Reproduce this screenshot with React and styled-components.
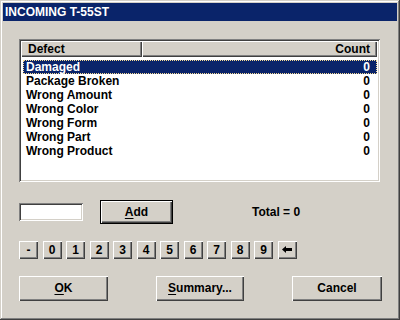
import React from "react"
import styled, { createGlobalStyle } from "styled-components"

const defects = [
  "Damaged",
  "Package Broken",
  "Wrong Amount",
  "Wrong Color",
  "Wrong Form",
  "Wrong Part",
  "Wrong Product",
]
const keys = ["-", "0", "1", "2", "3", "4", "5", "6", "7", "8", "9"]

const GlobalStyle = createGlobalStyle`
  html, body {
    margin: 0;
    padding: 0;
    background: #d4d0c8;
  }
  * {
    box-sizing: border-box;
  }
`

const BackArrow = () => (
  <svg width="10" height="7" viewBox="0 0 10 7">
    <polygon points="0,3.5 4,0 4,7" fill="#000" />
    <rect x="4" y="2" width="6" height="3" fill="#000" />
  </svg>
)

const App = () => {
  return (
    <Window>
      <GlobalStyle />
      <TitleBar>INCOMING T-55ST</TitleBar>
      <Body>
        <ListBox>
          <Header>
            <HeaderCell $width={121}>Defect</HeaderCell>
            <HeaderCell $right>Count</HeaderCell>
          </Header>
          <Rows>
            {defects.map((d, i) => (
              <Row key={d} $selected={i === 0}>
                <span>{d}</span>
                <span>0</span>
              </Row>
            ))}
          </Rows>
        </ListBox>
        <EntryRow>
          <Field />
          <Button $default $width={73} $height={24}>
            <u>A</u>dd
          </Button>
          <Total>Total = 0</Total>
        </EntryRow>
        <KeyRow>
          {keys.map(k => (
            <Key key={k}>{k}</Key>
          ))}
          <Key>
            <BackArrow />
          </Key>
        </KeyRow>
        <ButtonRow>
          <Button $width={89} $height={25}>
            <u>O</u>K
          </Button>
          <Button $width={88} $height={25}>
            <u>S</u>ummary...
          </Button>
          <Button $width={90} $height={25}>
            Cancel
          </Button>
        </ButtonRow>
      </Body>
    </Window>
  )
}

const Window = styled.div`
  width: 400px;
  height: 320px;
  padding: 3px;
  background: #d4d0c8;
  box-shadow: inset -1px -1px #404040, inset 1px 1px #d4d0c8,
    inset -2px -2px #808080, inset 2px 2px #ffffff;
  font-family: "Liberation Sans", Arial, sans-serif;
  font-weight: bold;
  font-size: 12px;
  color: #000;
  display: flex;
  flex-direction: column;
`

const TitleBar = styled.div`
  height: 18px;
  background: #0a246a;
  color: #fff;
  padding-left: 2px;
  display: flex;
  align-items: center;
`

const Body = styled.div`
  padding: 18px 15px 0 16px;
  display: flex;
  flex-direction: column;
`

const ListBox = styled.div`
  width: 361px;
  height: 143px;
  background: #fff;
  padding: 2px;
  box-shadow: inset 1px 1px #808080, inset -1px -1px #ffffff,
    inset 2px 2px #404040, inset -2px -2px #d4d0c8;
  display: flex;
  flex-direction: column;
`

const Header = styled.div`
  display: flex;
  height: 16px;
  width: 356px;
`

const HeaderCell = styled.div`
  ${p => (p.$width ? `width: ${p.$width}px;` : "flex: 1;")}
  height: 100%;
  background: #d4d0c8;
  box-shadow: inset 1px 1px #ffffff, inset -1px -1px #404040,
    inset -2px -2px #808080;
  display: flex;
  align-items: center;
  justify-content: ${p => (p.$right ? "flex-end" : "flex-start")};
  padding: 0 7px 0 7px;
`

const Rows = styled.div`
  padding: 3px 1px 0 2px;
  display: flex;
  flex-direction: column;
`

const Row = styled.div`
  height: 14px;
  display: flex;
  align-items: center;
  justify-content: space-between;
  padding: 0 6px 0 2px;
  border: 1px ${p => (p.$selected ? "dotted #f5db95" : "solid transparent")};
  background: ${p => (p.$selected ? "#0a246a" : "transparent")};
  color: ${p => (p.$selected ? "#fff" : "#000")};
`

const EntryRow = styled.div`
  margin-top: 18px;
  height: 24px;
  display: flex;
  align-items: center;
`

const Field = styled.div`
  width: 64px;
  height: 18px;
  background: #fff;
  box-shadow: inset 1px 1px #808080, inset -1px -1px #ffffff,
    inset 2px 2px #404040, inset -2px -2px #d4d0c8;
  margin-right: 17px;
`

const Button = styled.div`
  width: ${p => p.$width}px;
  height: ${p => p.$height}px;
  display: flex;
  align-items: center;
  justify-content: center;
  background: #d4d0c8;
  box-shadow: ${p =>
    p.$default
      ? "inset 0 0 0 1px #000, inset 2px 2px #fff, inset -2px -2px #404040, inset -3px -3px #808080"
      : "inset 1px 1px #fff, inset -1px -1px #404040, inset -2px -2px #808080"};
  padding-bottom: 1px;
  u {
    text-decoration-thickness: 1px;
    text-underline-offset: 2px;
  }
`

const Total = styled.div`
  margin-left: 79px;
`

const KeyRow = styled.div`
  margin-top: 17px;
  display: flex;
  gap: 4.5px;
`

const Key = styled.div`
  width: 19px;
  height: 18px;
  display: flex;
  align-items: center;
  justify-content: center;
  background: #d4d0c8;
  box-shadow: inset 1px 1px #fff, inset -1px -1px #404040,
    inset -2px -2px #808080;
  padding-bottom: 1px;
`

const ButtonRow = styled.div`
  margin-top: 17px;
  display: flex;
  justify-content: space-between;
  width: 363px;
`

export default App
